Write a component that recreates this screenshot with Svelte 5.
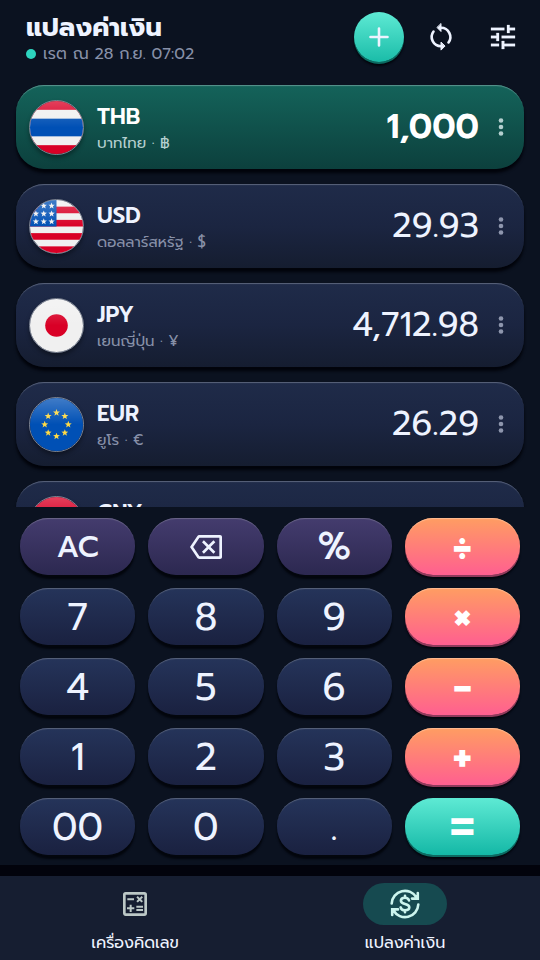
<script>
  const currencies = [
    { code: 'THB', name: 'บาทไทย', symbol: '฿', value: '1,000', flag: 'th' },
    { code: 'USD', name: 'ดอลลาร์สหรัฐ', symbol: '$', value: '29.93', flag: 'us' },
    { code: 'JPY', name: 'เยนญี่ปุ่น', symbol: '¥', value: '4,712.98', flag: 'jp' },
    { code: 'EUR', name: 'ยูโร', symbol: '€', value: '26.29', flag: 'eu' },
    { code: 'CNY', flag: 'cn' }
  ];

  const keys = [
    { label: 'AC', kind: 'func' },
    { label: 'ลบ', kind: 'func', icon: true },
    { label: '%', kind: 'func percent' },
    { label: '÷', kind: 'op' },
    { label: '7', kind: 'num' },
    { label: '8', kind: 'num' },
    { label: '9', kind: 'num' },
    { label: '×', kind: 'op' },
    { label: '4', kind: 'num' },
    { label: '5', kind: 'num' },
    { label: '6', kind: 'num' },
    { label: '−', kind: 'op' },
    { label: '1', kind: 'num' },
    { label: '2', kind: 'num' },
    { label: '3', kind: 'num' },
    { label: '+', kind: 'op' },
    { label: '00', kind: 'num' },
    { label: '0', kind: 'num' },
    { label: '.', kind: 'num' },
    { label: '=', kind: 'equals' }
  ];

  let active = $state('THB');

  /**
   * Points of a five-pointed star
   */
  function star(cx, cy, r) {
    return Array.from({ length: 10 }, (_, i) => {
      const radius = i % 2 ? r * 0.42 : r;
      const angle = (i * Math.PI) / 5 - Math.PI / 2;
      return `${cx + radius * Math.cos(angle)},${cy + radius * Math.sin(angle)}`;
    }).join(' ');
  }

  const usStars = [6, 14, 22].flatMap((y) => [6, 14, 22].map((x) => star(x, y, 3.4)));
  const euStars = Array.from({ length: 8 }, (_, i) => {
    const a = (i * Math.PI) / 4;
    return star(27 + 12 * Math.sin(a), 27 - 12 * Math.cos(a), 3.7);
  });
</script>

<div class="app">
  <header>
    <div class="heading">
      <h1>แปลงค่าเงิน</h1>
      <p class="status"><span class="dot"></span>เรต ณ 28 ก.ย. 07:02</p>
    </div>
    <div class="actions">
      <button class="add" aria-label="เพิ่มสกุลเงิน">
        <svg width="32" height="32" viewBox="0 0 32 32">
          <path d="M16 7.500v17M7.500 16h17" stroke="currentColor" stroke-width="2.600" stroke-linecap="round" />
        </svg>
      </button>
      <button aria-label="รีเฟรช">
        <svg width="32" height="32" viewBox="0 0 32 32" fill="none" stroke="currentColor" stroke-width="2.600" stroke-linecap="round" stroke-linejoin="round">
          <path d="M8.500 10.500A9.300 9.300 0 0 0 16 25.300M23.500 21.500A9.300 9.300 0 0 0 16 6.700" />
          <path d="M16 2.900v7.600L12.200 6.700zM16 21.500v7.600l3.800-3.800z" fill="currentColor" stroke-width="1" />
        </svg>
      </button>
      <button aria-label="ตั้งค่า">
        <svg width="32" height="32" viewBox="0 0 24 24" fill="currentColor" stroke="currentColor" stroke-width=".2" stroke-linejoin="round">
          <path d="M3 17v2h6v-2H3zM3 5v2h10V5H3zm10 16v-2h8v-2h-8v-2h-2v6h2zM7 9v2H3v2h4v2h2V9H7zm14 4v-2H11v2h10zm-6-4h2V7h4V5h-4V3h-2v6z" />
        </svg>
      </button>
    </div>
  </header>

  <main>
    {#each currencies as c (c.code)}
      <section class="card" class:active={active === c.code}>
        <button class="pick" onclick={() => (active = c.code)}>
          <span class="flag">
            <svg viewBox="0 0 54 54">
              {#if c.flag === 'th'}
                <rect width="54" height="54" fill="#d90026" />
                <rect y="9" width="54" height="36" fill="#f0f0f0" />
                <rect y="18" width="54" height="18" fill="#0050b5" />
              {:else if c.flag === 'us'}
                <rect width="54" height="54" fill="#f0f0f0" />
                {#each [0, 1, 2, 3] as i}
                  <rect y={6.75 + i * 13.5} width="54" height="6.75" fill="#d90026" />
                {/each}
                <rect width="27" height="27" fill="#0050b5" />
                {#each usStars as points}
                  <polygon {points} fill="#f0f0f0" />
                {/each}
              {:else if c.flag === 'jp'}
                <rect width="54" height="54" fill="#f0f0f0" />
                <circle cx="27" cy="27" r="11.5" fill="#d90026" />
              {:else if c.flag === 'eu'}
                <rect width="54" height="54" fill="#0050b5" />
                {#each euStars as points}
                  <polygon {points} fill="#ffda44" />
                {/each}
              {:else}
                <rect width="54" height="54" fill="#d90026" />
                <polygon points={star(18, 27, 8)} fill="#ffda44" />
              {/if}
            </svg>
          </span>
          <span class="info">
            <span class="code">{c.code}</span>
            <span class="name">{#if c.name}{c.name} · {c.symbol}{/if}</span>
          </span>
          {#if c.value}
            <span class="value">{c.value}</span>
          {/if}
        </button>
        <button class="more" aria-label="ตัวเลือก">
          <svg width="6" height="20" viewBox="0 0 6 20" fill="currentColor">
            <circle cx="3" cy="3.5" r="2.300" />
            <circle cx="3" cy="10" r="2.300" />
            <circle cx="3" cy="16.500" r="2.300" />
          </svg>
        </button>
      </section>
    {/each}
  </main>

  <div class="keypad">
    {#each keys as key (key.label)}
      <button class="key {key.kind}" aria-label={key.icon ? key.label : undefined}>
        {#if key.icon}
          <svg width="32" height="32" viewBox="0 0 24 24" fill="currentColor">
            <path d="M22.500 3H7c-.69 0-1.230.35-1.590.88L0 12l5.410 8.110c.36.53.9.89 1.590.89h15.500c.9 0 1.500-.6 1.500-1.500v-15c0-.9-.6-1.500-1.500-1.500zM22 19H7.070L2.400 12l4.660-7H22v14zm-11.590-2L14 13.410 17.590 17 19 15.590 15.410 12 19 8.410 17.590 7 14 10.590 10.410 7 9 8.410 12.590 12 9 15.590z" />
          </svg>
        {:else}
          {key.label}
        {/if}
      </button>
    {/each}
  </div>

  <nav>
    <a href="#calculator">
      <span class="pill">
        <svg class="calc" width="32" height="32" viewBox="0 0 24 24" fill="currentColor">
          <path d="M19 3H5a2 2 0 0 0-2 2v14c0 1.100.9 2 2 2h14a2 2 0 0 0 2-2V5a2 2 0 0 0-2-2zm0 16H5V5h14v14z" />
          <path d="M6.250 7.720h5v1.500h-5zM13 15.750h5v1.500h-5zM13 13.250h5v1.500h-5zM8 18h1.500v-2h2v-1.500h-2v-2H8v2H6V16h2z" />
          <path d="M14.090 10.950l1.410-1.410 1.410 1.410 1.060-1.060-1.410-1.420 1.410-1.410L16.910 6 15.500 7.410 14.090 6l-1.060 1.060 1.410 1.410-1.410 1.420z" />
        </svg>
      </span>
      เครื่องคิดเลข
    </a>
    <a href="#convert" class="current" aria-current="page">
      <span class="pill">
        <svg width="32" height="32" viewBox="0 0 32 32" fill="none" stroke="currentColor" stroke-width="2.600" stroke-linecap="round" stroke-linejoin="miter">
          <path d="M2.700 15.500A13.300 13.300 0 0 1 27.500 9.500M28.800 5v5.600H23" />
          <path d="M29.300 16.500A13.300 13.300 0 0 1 4.500 22.500M3.200 27v-5.600H9" />
          <path d="M20 12.500c-.5-1.800-1.900-2.700-4-2.700-2.500 0-4.100 1.200-4.100 3 0 4.300 8.400 2.100 8.400 6.500 0 1.800-1.700 3-4.300 3-2.300 0-3.900-1-4.400-2.900M16 7.800v2M16 22.300v2" />
        </svg>
      </span>
      แปลงค่าเงิน
    </a>
  </nav>
</div>

<style>
  :global(body) {
    margin: 0;
    background: #0b1220;
  }

  .app {
    display: flex;
    flex-direction: column;
    height: 100vh;
    background: #0b1220;
    color: #eef3ff;
    font-family: Prompt, Kanit, 'Noto Sans', 'Noto Sans Thai', sans-serif;
  }

  button {
    border: 0;
    padding: 0;
    background: none;
    color: inherit;
    font-family: inherit;
    cursor: pointer;
  }

  svg {
    display: block;
  }

  header {
    display: flex;
    justify-content: space-between;
    padding: 12px 12px 0 26px;
    height: 73px;
    flex-shrink: 0;
  }

  h1 {
    margin: 0;
    font-size: 26px;
    line-height: 32px;
    font-weight: 700;
  }

  .status {
    display: flex;
    align-items: center;
    gap: 7px;
    margin: 0;
    color: #8790a8;
    font-size: 16px;
    line-height: 20px;
  }

  .dot {
    width: 10px;
    height: 10px;
    border-radius: 50%;
    background: #2dd4bf;
  }

  .actions {
    display: flex;
    gap: 12px;
  }

  .actions button {
    display: flex;
    align-items: center;
    justify-content: center;
    width: 50px;
    height: 50px;
    border-radius: 50%;
  }

  .actions .add {
    background: linear-gradient(#5eead4, #1abca8);
    box-shadow: 0 2px 0 #0c6b62, 0 4px 2px #03060d;
  }

  main {
    flex: 1;
    min-height: 0;
    overflow: hidden;
    display: flex;
    flex-direction: column;
    gap: 15px;
    padding: 0 16px;
  }

  .card {
    display: flex;
    align-items: center;
    flex-shrink: 0;
    box-sizing: border-box;
    height: 84px;
    padding: 0 9px 0 13px;
    border-radius: 28px;
    background: linear-gradient(#1f2b49, #1b2541 50%, #151d30);
    box-shadow: inset 0 2px 1px -1px #5a647c, 0 4px 3px #02040b;
  }

  .card.active {
    background: linear-gradient(#14635a, #0c403d);
    box-shadow: inset 0 2px 1px -1px #5a958e, 0 4px 3px #02040b;
  }

  .pick {
    display: flex;
    align-items: center;
    flex: 1;
    min-width: 0;
    text-align: left;
  }

  .flag {
    position: relative;
    box-sizing: border-box;
    width: 55px;
    height: 55px;
    margin-right: 13px;
    border: 1px solid #7d8492;
    border-radius: 50%;
    overflow: hidden;
    flex-shrink: 0;
    box-shadow: 0 3px 4px rgba(0, 0, 0, 0.35);
  }

  .flag::after {
    content: '';
    position: absolute;
    inset: 0;
    background: linear-gradient(rgba(255, 255, 255, 0.25), rgba(255, 255, 255, 0) 50%);
  }

  .info {
    display: flex;
    flex-direction: column;
    flex: 1;
    padding-top: 3px;
  }

  .code {
    font-size: 22px;
    line-height: 28px;
    font-weight: 600;
  }

  .name {
    min-height: 24px;
    color: #8790a8;
    font-size: 15px;
    line-height: 24px;
  }

  .value {
    font-size: 34px;
    line-height: 40px;
  }

  .active .code,
  .active .value {
    color: #fff;
    font-weight: 600;
  }

  .active .name {
    color: #b4cfcf;
  }

  .more {
    display: flex;
    align-items: center;
    justify-content: center;
    width: 28px;
    height: 40px;
    margin-left: 8px;
    color: #8e96ad;
  }

  .active .more {
    color: #b4cfcf;
  }

  .keypad {
    display: grid;
    grid-template-columns: repeat(4, 1fr);
    grid-auto-rows: 57px;
    gap: 13px;
    padding: 11px 20px 10px;
  }

  .key {
    display: flex;
    align-items: center;
    justify-content: center;
    border-radius: 28px;
    font-size: 38px;
    line-height: 40px;
    background: linear-gradient(#25345a, #1a2140);
    box-shadow: inset 0 2px 1px -1px #5a647c, 0 4px 2px #03060d;
  }

  .key.num {
    padding-top: 2px;
  }

  .key.func {
    background: linear-gradient(#443c6e, #2c2850);
    box-shadow: inset 0 2px 1px -1px #6c6789, 0 4px 2px #03060d;
    font-size: 30px;
    font-weight: 500;
  }

  .key.percent {
    font-size: 38px;
  }

  .key.op {
    background: linear-gradient(#ff9d62, #ff5f90);
    box-shadow: inset 0 2px 1px -1px #ffbd94, 0 2px 0 #8f3a5c, 0 4px 2px #03060d;
    color: #fff;
    font-size: 48px;
    font-weight: 600;
  }

  .key.equals {
    background: linear-gradient(#5eead4, #14b8a6);
    box-shadow: 0 2px 0 #0c6b62, 0 4px 2px #03060d;
    color: #fff;
    font-size: 48px;
    font-weight: 600;
  }

  nav {
    display: grid;
    grid-template-columns: 1fr 1fr;
    box-sizing: border-box;
    height: 95px;
    flex-shrink: 0;
    padding-top: 7px;
    border-top: 11px solid #02030c;
    background: #161e31;
  }

  nav a {
    display: flex;
    flex-direction: column;
    align-items: center;
    gap: 6px;
    color: #eef3ff;
    font-size: 16px;
    line-height: 24px;
    text-decoration: none;
  }

  .pill {
    display: flex;
    align-items: center;
    justify-content: center;
    width: 84px;
    height: 42px;
    border-radius: 21px;
  }

  .calc {
    color: #bcc8c6;
  }

  .current .pill {
    background: #164a50;
    color: #ccf5ee;
  }
</style>
